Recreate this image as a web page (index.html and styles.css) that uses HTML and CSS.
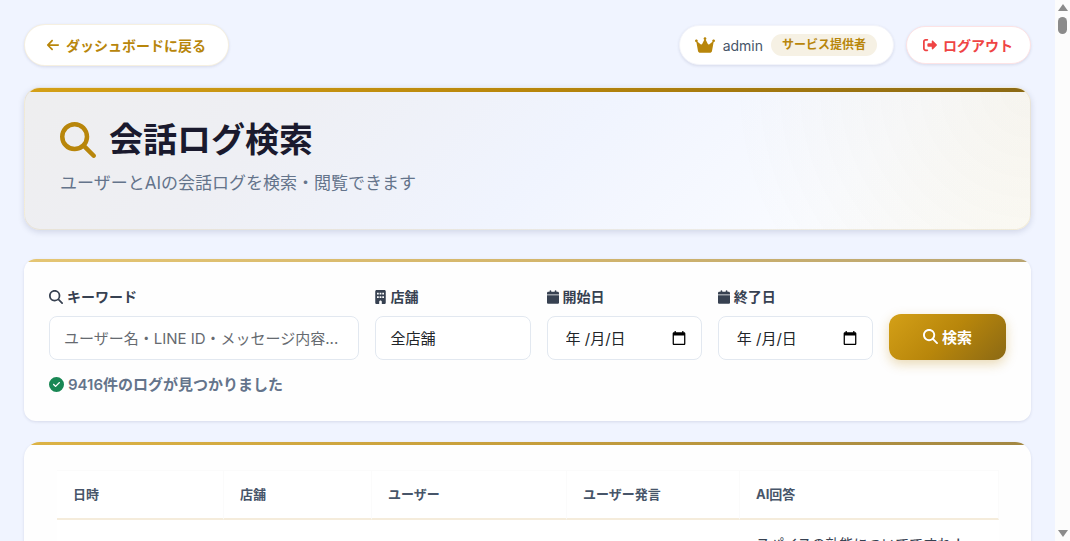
FILE: index.html
```
<!DOCTYPE html>
<html lang="ja">
<head>
    <meta charset="UTF-8">
    <title>会話ログ検索</title>
    <meta name="viewport" content="width=device-width, initial-scale=1">
    <link rel="stylesheet" href="styles.css">
</head>
<body>
    <svg class="icon-defs" aria-hidden="true">
        <symbol id="icon-search" viewBox="0 0 512 512"><path d="M416 208c0 45.900-14.900 88.300-40 122.700L502.600 457.400c12.500 12.500 12.500 32.800 0 45.300s-32.800 12.500-45.300 0L330.700 376c-34.400 25.200-76.800 40-122.700 40C93.100 416 0 322.900 0 208S93.100 0 208 0S416 93.100 416 208zM208 352a144 144 0 1 0 0-288 144 144 0 1 0 0 288z"/></symbol>
        <symbol id="icon-calendar" viewBox="0 0 448 512"><path d="M96 32V64H48C21.500 64 0 85.500 0 112v48H448V112c0-26.500-21.500-48-48-48H352V32c0-17.700-14.300-32-32-32s-32 14.300-32 32V64H160V32c0-17.700-14.300-32-32-32S96 14.300 96 32zM448 192H0V464c0 26.500 21.500 48 48 48H400c26.500 0 48-21.500 48-48V192z"/></symbol>
        <symbol id="icon-picker" viewBox="2 1 20 22"><path d="M20 3h-1V1h-2v2H7V1H5v2H4c-1.100 0-2 .9-2 2v16c0 1.100.9 2 2 2h16c1.100 0 2-.9 2-2V5c0-1.100-.9-2-2-2zm0 18H4V8h16v13z"/></symbol>
    </svg>

    <div class="window">
        <div class="page">
            <header class="topbar">
                <a class="pill back-link" href="#">
                    <svg class="icon" viewBox="0 0 448 512"><path d="M9.400 233.400c-12.500 12.500-12.500 32.800 0 45.300l160 160c12.500 12.500 32.800 12.500 45.300 0s12.500-32.800 0-45.300L109.200 288H416c17.700 0 32-14.300 32-32s-14.300-32-32-32H109.300L214.600 118.600c12.500-12.500 12.500-32.800 0-45.300s-32.800-12.500-45.300 0l-160 160z"/></svg>
                    ダッシュボードに戻る
                </a>
                <div class="account">
                    <div class="pill user-info">
                        <svg class="icon crown" viewBox="0 0 576 512"><path d="M309 106c11.400-7 19-19.700 19-34c0-22.100-17.900-40-40-40s-40 17.900-40 40c0 14.400 7.600 27 19 34L209.700 220.600c-9.100 18.200-32.700 23.400-48.600 10.700L72 160c5-6.700 8-15 8-24c0-22.100-17.900-40-40-40S0 113.900 0 136s17.900 40 40 40c.2 0 .5 0 .7 0L86.400 427.400c5.500 30.400 32 52.600 63 52.600H426.600c30.900 0 57.400-22.100 63-52.600L535.300 176c.2 0 .5 0 .7 0c22.100 0 40-17.900 40-40s-17.900-40-40-40s-40 17.900-40 40c0 9 3 17.300 8 24l-89.100 71.300c-15.900 12.700-39.500 7.500-48.600-10.700L309 106z"/></svg>
                        <span>admin</span>
                        <span class="role">サービス提供者</span>
                    </div>
                    <a class="pill logout" href="#">
                        <svg class="icon" viewBox="0 0 512 512"><path d="M160 96c17.700 0 32-14.300 32-32s-14.300-32-32-32H96C43 32 0 75 0 128V384c0 53 43 96 96 96h64c17.700 0 32-14.300 32-32s-14.300-32-32-32H96c-17.700 0-32-14.300-32-32V128c0-17.700 14.300-32 32-32h64zM502.600 278.600c12.500-12.500 12.500-32.800 0-45.300l-128-128c-22-22-54.600-2-54.600 22.700v64H192c-17.700 0-32 14.300-32 32v64c0 17.700 14.300 32 32 32H320v64c0 28 34 43 54.600 22.600l128-128z"/></svg>
                        ログアウト
                    </a>
                </div>
            </header>

            <section class="card hero">
                <h1>
                    <svg class="icon" viewBox="0 0 512 512"><use href="#icon-search"/></svg>
                    会話ログ検索
                </h1>
                <p>ユーザーとAIの会話ログを検索・閲覧できます</p>
            </section>

            <section class="card search-card">
                <form class="search-form">
                    <div class="field">
                        <label for="keyword"><svg class="icon"><use href="#icon-search"/></svg>キーワード</label>
                        <input type="text" id="keyword" placeholder="ユーザー名・LINE ID・メッセージ内容...">
                    </div>
                    <div class="field">
                        <label for="store"><svg class="icon building" viewBox="0 0 384 512"><path fill-rule="evenodd" d="M48 0C21.500 0 0 21.500 0 48V464c0 26.500 21.500 48 48 48h96V432c0-26.500 21.500-48 48-48s48 21.500 48 48v80h96c26.500 0 48-21.500 48-48V48c0-26.500-21.500-48-48-48H48zM64 96h64v64H64zM160 96h64v64h-64zM256 96h64v64h-64zM64 224h64v64H64zM160 224h64v64h-64zM256 224h64v64h-64z"/></svg>店舗</label>
                        <select id="store">
                            <option>全店舗</option>
                        </select>
                    </div>
                    <div class="field">
                        <label for="start-date"><svg class="icon calendar"><use href="#icon-calendar"/></svg>開始日</label>
                        <div class="date-box">
                            <input type="text" id="start-date" placeholder="年 /月/日">
                            <button type="button" aria-label="開始日を選択"><svg class="icon"><use href="#icon-picker"/></svg></button>
                        </div>
                    </div>
                    <div class="field">
                        <label for="end-date"><svg class="icon calendar"><use href="#icon-calendar"/></svg>終了日</label>
                        <div class="date-box">
                            <input type="text" id="end-date" placeholder="年 /月/日">
                            <button type="button" aria-label="終了日を選択"><svg class="icon"><use href="#icon-picker"/></svg></button>
                        </div>
                    </div>
                    <button type="submit" class="search-button"><svg class="icon"><use href="#icon-search"/></svg>検索</button>
                </form>
                <p class="result-count">
                    <svg class="icon" viewBox="0 0 512 512"><path d="M256 512A256 256 0 1 0 256 0a256 256 0 1 0 0 512zM369 209L241 337c-9.400 9.400-24.600 9.400-33.900 0l-64-64c-9.400-9.400-9.400-24.600 0-33.900s24.600-9.400 33.900 0l47 47L335 175c9.400-9.400 24.600-9.400 33.900 0s9.400 24.600 0 33.900z"/></svg>
                    9416件のログが見つかりました
                </p>
            </section>

            <section class="card log-card">
                <table class="log-table">
                    <colgroup>
                        <col class="col-date"><col class="col-store"><col class="col-user"><col class="col-message"><col>
                    </colgroup>
                    <thead>
                        <tr>
                            <th>日時</th>
                            <th>店舗</th>
                            <th>ユーザー</th>
                            <th>ユーザー発言</th>
                            <th>AI回答</th>
                        </tr>
                    </thead>
                    <tbody>
                        <tr>
                            <td></td>
                            <td></td>
                            <td></td>
                            <td></td>
                            <td>スパイスの効能についてですね！</td>
                        </tr>
                    </tbody>
                </table>
            </section>
        </div>
        <div class="scrollbar" aria-hidden="true">
            <span class="arrow-up"></span>
            <span class="thumb"></span>
            <span class="arrow-down"></span>
        </div>
    </div>
</body>
</html>
```
FILE: styles.css
```
* {
    box-sizing: border-box;
}

body {
    margin: 0;
    font-family: Inter, "Noto Sans CJK JP", sans-serif;
    font-size: 14px;
    color: #374151;
    background: #f0f4ff;
}

.icon-defs {
    position: absolute;
    width: 0;
    height: 0;
}

.icon {
    width: 14px;
    height: 14px;
    fill: currentColor;
    flex: none;
}

.window {
    display: flex;
    height: 100vh;
    overflow: hidden;
}

.page {
    flex: 1;
    min-width: 0;
    padding: 24px;
}

/* ヘッダー */
.topbar {
    display: flex;
    justify-content: space-between;
    align-items: center;
    margin-bottom: 21px;
}

.account {
    display: flex;
    align-items: center;
    gap: 12px;
}

.pill {
    display: flex;
    align-items: center;
    background: #fff;
    border: 1px solid rgba(184, 134, 11, 0.12);
    border-radius: 24px;
    box-shadow: 0 1px 3px rgba(30, 41, 90, 0.12);
    text-decoration: none;
}

.back-link {
    gap: 6px;
    height: 42px;
    padding: 0 22px 0 21px;
    color: #b8860b;
    font-weight: 700;
}

.user-info {
    gap: 8px;
    height: 40px;
    padding: 0 16px 0 15px;
    border-color: #f3f4fa;
    color: #475569;
}

.user-info .crown {
    width: 20px;
    height: 18px;
    color: #b8860b;
}

.role {
    padding: 0 11px;
    border-radius: 12px;
    background: #f6f1e4;
    color: #b8860b;
    font-size: 12px;
    font-weight: 700;
    line-height: 22px;
}

.logout {
    gap: 6px;
    height: 38px;
    padding: 0 17px 0 16px;
    border-color: #fde3e5;
    color: #ef4444;
    font-weight: 700;
}

/* カード */
.card {
    position: relative;
    overflow: hidden;
    background: #fefefe;
    border-radius: 12px;
    box-shadow: 0 1px 3px rgba(30, 41, 90, 0.12);
}

.card::before {
    content: "";
    position: absolute;
    top: 0;
    left: 0;
    right: 0;
    height: 3px;
    background: linear-gradient(90deg, #d4a017, #b8860b, #8b6914);
}

.hero {
    margin-bottom: 29px;
    padding: 30px 35px 32px;
    border: 1px solid rgba(184, 134, 11, 0.1);
    border-radius: 16px;
    background:
        radial-gradient(circle at 100% 0, rgba(184, 134, 11, 0.06), rgba(184, 134, 11, 0) 300px),
        linear-gradient(135deg, #eeeeef 0%, #eeeff4 25%, #f0f4fe 52%, #f9fbff 80%, #fcfcf9 100%);
    box-shadow: 0 2px 6px rgba(30, 41, 90, 0.15);
}

.hero::before {
    height: 4px;
}

.hero h1 {
    display: flex;
    align-items: center;
    gap: 13px;
    margin: 0;
    color: #1a1a2e;
    font-size: 34px;
    font-weight: 700;
    line-height: 44px;
}

.hero h1 .icon {
    width: 36px;
    height: 36px;
    color: #b8860b;
}

.hero p {
    margin: 7px 0 0;
    color: #64748b;
    font-size: 17px;
    line-height: 28px;
}

/* 検索フォーム */
.search-card {
    margin-bottom: 21px;
    padding: 26px 25px 24px;
}

.search-card::before {
    opacity: 0.6;
}

.search-form {
    display: grid;
    grid-template-columns: 2fr 1fr 1fr 1fr 117px;
    gap: 16px;
    align-items: end;
}

.field label {
    display: flex;
    align-items: center;
    gap: 4px;
    margin-bottom: 7px;
    font-weight: 700;
    line-height: 24px;
}

.field .building {
    width: 11px;
}

.field .calendar {
    width: 12px;
}

.field input,
.field select {
    display: block;
    width: 100%;
    height: 44px;
    padding: 0 14px;
    border: 1px solid #e2e8f0;
    border-radius: 8px;
    background: #fff;
    color: #212529;
    font-family: inherit;
    font-size: 15px;
    appearance: none;
}

.field input::placeholder {
    color: #666a70;
    opacity: 1;
}

.date-box {
    position: relative;
}

.field .date-box input {
    padding: 0 40px 0 18px;
}

.field .date-box input::placeholder {
    color: #212529;
}

.date-box button {
    position: absolute;
    top: 0;
    right: 16px;
    display: flex;
    align-items: center;
    height: 100%;
    padding: 0;
    border: none;
    background: none;
    color: #000;
    cursor: pointer;
}

.search-button {
    display: flex;
    justify-content: center;
    align-items: center;
    gap: 4px;
    height: 46px;
    padding: 0 0 2px;
    border: none;
    border-radius: 12px;
    background: linear-gradient(135deg, #d4a017 0%, #b8860b 50%, #8b6914 100%);
    box-shadow: 0 4px 12px rgba(184, 134, 11, 0.3);
    color: #fff;
    font-family: inherit;
    font-size: 15px;
    font-weight: 700;
    cursor: pointer;
}

.search-button .icon,
.result-count .icon {
    width: 15px;
    height: 15px;
}

.result-count {
    display: flex;
    align-items: center;
    gap: 4px;
    margin: 12px 0 0;
    color: #64748b;
    font-size: 15px;
    font-weight: 600;
    line-height: 25px;
}

.result-count .icon {
    color: #198754;
}

/* ログ一覧 */
.log-card {
    padding: 28px 32px 32px 33px;
    border-radius: 16px;
}

.log-card::before {
    opacity: 0.8;
}

.log-table {
    width: 100%;
    table-layout: fixed;
    border-collapse: separate;
    border-spacing: 0;
    background: #fff;
}

.col-date {
    width: 167px;
}

.col-store {
    width: 148px;
}

.col-user {
    width: 195px;
}

.col-message {
    width: 173px;
}

.log-table th {
    height: 50px;
    padding: 0 16px 2px;
    border-top: 1px solid #fbfbfb;
    border-right: 1px solid #fbfbfb;
    border-bottom: 2px solid #f5ecdb;
    color: #475569;
    font-size: 13px;
    font-weight: 700;
    text-align: left;
}

.log-table td {
    padding: 12px 16px;
    line-height: 24px;
    white-space: nowrap;
}

/* スクロールバー */
.scrollbar {
    display: flex;
    flex-direction: column;
    align-items: center;
    width: 15px;
    padding: 4px 0;
    background: #fcfcfc;
}

.arrow-up,
.arrow-down {
    border: 5px solid transparent;
}

.arrow-up {
    border-top: none;
    border-bottom: 7px solid #8b8b8b;
}

.thumb {
    width: 9px;
    height: 17px;
    margin-top: 6px;
    border-radius: 5px;
    background: #8b8b8b;
}

.arrow-down {
    margin-top: auto;
    border-bottom: none;
    border-top: 7px solid #8b8b8b;
}
```
